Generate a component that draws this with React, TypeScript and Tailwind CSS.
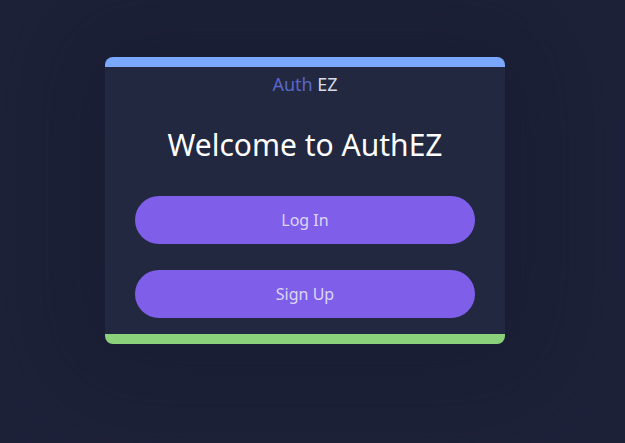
import React from 'react';

const AuthButton = ({ label }: { label: string }) => (
  <button className="w-full h-[48px] rounded-full bg-[#7f5fea] text-[#dcd6f7] text-[16px] leading-none">
    {label}
  </button>
);

export default function App() {
  return (
    <div className="min-h-screen w-full bg-[#1e2239] pl-[105px] pt-[57px] font-['Noto_Sans',sans-serif]">
      <div className="w-[400px] rounded-[8px] overflow-hidden bg-[#212840] shadow-[0_0_110px_50px_rgba(24,26,48,0.6)]">
        <div className="h-[10px] bg-[#7aa7ff]" />
        <div className="flex flex-col items-center">
          <div className="mt-[5px] text-[18px] leading-[24px]">
            <span className="text-[#5a67c8]">Auth</span>{' '}
            <span className="text-[#d8dae8]">EZ</span>
          </div>
          <h1 className="mt-[31px] text-[30px] leading-[36px] text-white">Welcome to AuthEZ</h1>
        </div>
        <div className="flex flex-col gap-[26px] px-[30px] pt-[33px] pb-[16px]">
          <AuthButton label="Log In" />
          <AuthButton label="Sign Up" />
        </div>
        <div className="h-[10px] bg-[#8bd07a]" />
      </div>
    </div>
  );
}
